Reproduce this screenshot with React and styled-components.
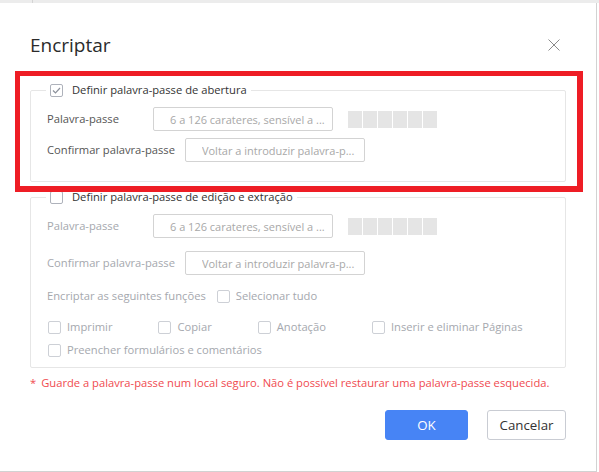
import React from 'react';
import styled, { createGlobalStyle } from 'styled-components';

const GlobalStyle = createGlobalStyle`
  html, body { margin: 0; padding: 0; background: #fff; }
  body {
    font-family: "Open Sans", "Noto Sans", sans-serif;
    font-size: 11.2px;
    color: #333;
  }
  #root { width: 599px; height: 472px; overflow: hidden; }
`;

const Screen = styled.div`
  width: 599px;
  height: 472px;
  display: flex;
  flex-direction: column;
  background: #fff;
`;

const TopStrip = styled.div`
  height: 3px;
  flex-shrink: 0;
  background: #ececec;
  display: flex;
`;

const StripCell = styled.div`
  width: 32px;
  border-right: 1px solid #d4d4d4;
`;

const Body = styled.div`
  flex: 1;
  display: flex;
`;

const Dialog = styled.div`
  position: relative;
  box-sizing: border-box;
  width: 597px;
  height: 469px;
  background: #fff;
  border-right: 1px solid #d2d2d2;
  border-bottom: 1px solid #d2d2d2;
  padding: 28px 30px 0 30px;
  display: flex;
  flex-direction: column;
`;

const Header = styled.div`
  height: 28px;
  display: flex;
  align-items: center;
  justify-content: space-between;
`;

const Title = styled.h1`
  margin: 0;
  font-size: 19px;
  line-height: 28px;
  font-weight: 400;
  color: #2b2b2b;
`;

const CloseButton = styled.button`
  border: 0;
  background: none;
  padding: 0;
  margin-right: 6px;
  width: 12px;
  height: 12px;
  display: flex;
  cursor: pointer;
`;

const Group = styled.fieldset`
  margin: ${p => p.$mt}px 0 0 0;
  padding: 10px 16px ${p => p.$pb}px 16px;
  border: 1px solid #e6e6e6;
  border-radius: 2px;
  min-width: 0;
  display: flex;
  flex-direction: column;
`;

const Legend = styled.legend`
  margin-left: -1px;
  padding: 0 4px;
  height: 14px;
  display: flex;
  align-items: center;
  gap: 9px;
  color: #333;
  line-height: 14px;
`;

const Row = styled.div`
  display: flex;
  align-items: center;
  margin-top: ${p => p.$mt || 0}px;
  min-height: ${p => p.$h || 16}px;
`;

const Label = styled.span`
  flex-shrink: 0;
  min-width: 96px;
  margin-right: ${p => p.$mr ?? 10}px;
  color: ${p => (p.$disabled ? '#a5a8ae' : '#555')};
  line-height: 16px;
  white-space: nowrap;
`;

const Input = styled.input`
  box-sizing: border-box;
  width: 180px;
  height: 24px;
  margin: 0;
  padding: 0 4px 0 16px;
  border: 1px solid #d3d3d3;
  border-radius: 2px;
  background: #fff;
  font-family: inherit;
  font-size: 11px;
  color: #333;
  outline: none;
  &::placeholder { color: #a8a8a8; opacity: 1; }
`;

const Meter = styled.div`
  margin-left: 15px;
  display: flex;
  gap: 1px;
`;

const MeterSeg = styled.span`
  width: 14px;
  height: 17px;
  background: #e5e5e5;
`;

const Box = styled.span`
  box-sizing: border-box;
  flex-shrink: 0;
  width: 13px;
  height: 13px;
  border: 1px solid ${p => (p.$disabled ? '#cdd0d6' : '#aeb2bb')};
  border-radius: 2px;
  background: #fff;
  display: flex;
  align-items: center;
  justify-content: center;
`;

const Check = styled.label`
  display: flex;
  align-items: center;
  gap: 6px;
  color: #a5a8ae;
  line-height: 16px;
  white-space: nowrap;
`;

const Options = styled.div`
  display: flex;
  align-items: center;
  gap: 46px;
  margin-top: ${p => p.$mt || 0}px;
  padding-left: 1px;
`;

const Warning = styled.p`
  margin: 7px 0 0 0;
  line-height: 16px;
  color: #f04a4f;
  white-space: nowrap;
`;

const Star = styled.span`
  margin-right: 5px;
`;

const Footer = styled.div`
  margin-top: 19px;
  display: flex;
  justify-content: flex-end;
  gap: 19px;
`;

const Button = styled.button`
  box-sizing: border-box;
  height: 30px;
  width: ${p => p.$w}px;
  border-radius: 3px;
  font-family: inherit;
  font-size: 13.3px;
  cursor: pointer;
  border: 1px solid ${p => (p.$primary ? '#4784f5' : '#c9ccd3')};
  background: ${p => (p.$primary ? '#4784f5' : '#fff')};
  color: ${p => (p.$primary ? '#fff' : '#333')};
`;

const Highlight = styled.div`
  position: absolute;
  left: 15px;
  top: 68px;
  width: 568px;
  height: 121px;
  box-sizing: border-box;
  border-style: solid;
  border-color: #ee1d25;
  border-width: 5px 6px 6px 5px;
  pointer-events: none;
`;

const CheckMark = () => (
  <svg width="9" height="7" viewBox="0 0 9 7">
    <path d="M1 3.5 L3.5 6 L8 1" fill="none" stroke="#8c919b" strokeWidth="1.2" />
  </svg>
);

const CheckBox = ({ checked, disabled }) => (
  <Box $disabled={disabled}>{checked && <CheckMark />}</Box>
);

const Strength = () => (
  <Meter>
    {[0, 1, 2, 3, 4, 5].map(i => (
      <MeterSeg key={i} />
    ))}
  </Meter>
);

export default function App() {
  return (
    <>
      <GlobalStyle />
      <Screen>
        <TopStrip>
          <StripCell />
        </TopStrip>
        <Body>
          <Dialog>
            <Header>
              <Title>Encriptar</Title>
              <CloseButton aria-label="Fechar">
                <svg width="12" height="12" viewBox="0 0 12 12">
                  <path d="M0.5 0.5 L11.5 11.5 M11.5 0.5 L0.5 11.5" stroke="#8a8a8a" strokeWidth="1" fill="none" />
                </svg>
              </CloseButton>
            </Header>

            <Group $mt={24} $pb={19}>
              <Legend>
                <CheckBox checked />
                Definir palavra-passe de abertura
              </Legend>
              <Row $h={24}>
                <Label>Palavra-passe</Label>
                <Input placeholder="6 a 126 carateres, sensível a ..." />
                <Strength />
              </Row>
              <Row $h={24} $mt={7}>
                <Label>Confirmar palavra-passe</Label>
                <Input placeholder="Voltar a introduzir palavra-p..." />
              </Row>
            </Group>

            <Group $mt={8} $pb={9}>
              <Legend>
                <CheckBox />
                Definir palavra-passe de edição e extração
              </Legend>
              <Row $h={24}>
                <Label $disabled>Palavra-passe</Label>
                <Input disabled placeholder="6 a 126 carateres, sensível a ..." />
                <Strength />
              </Row>
              <Row $h={24} $mt={13}>
                <Label $disabled>Confirmar palavra-passe</Label>
                <Input disabled placeholder="Voltar a introduzir palavra-p..." />
              </Row>
              <Row $mt={13}>
                <Label $disabled $mr={11}>Encriptar as seguintes funções</Label>
                <Check>
                  <CheckBox disabled />
                  Selecionar tudo
                </Check>
              </Row>
              <Options $mt={15}>
                <Check>
                  <CheckBox disabled />
                  Imprimir
                </Check>
                <Check>
                  <CheckBox disabled />
                  Copiar
                </Check>
                <Check>
                  <CheckBox disabled />
                  Anotação
                </Check>
                <Check>
                  <CheckBox disabled />
                  Inserir e eliminar Páginas
                </Check>
              </Options>
              <Options $mt={7}>
                <Check>
                  <CheckBox disabled />
                  Preencher formulários e comentários
                </Check>
              </Options>
            </Group>

            <Warning>
              <Star>*</Star>
              Guarde a palavra-passe num local seguro. Não é possível restaurar uma palavra-passe esquecida.
            </Warning>

            <Footer>
              <Button $primary $w={83}>OK</Button>
              <Button $w={79}>Cancelar</Button>
            </Footer>

            <Highlight />
          </Dialog>
        </Body>
      </Screen>
    </>
  );
}
